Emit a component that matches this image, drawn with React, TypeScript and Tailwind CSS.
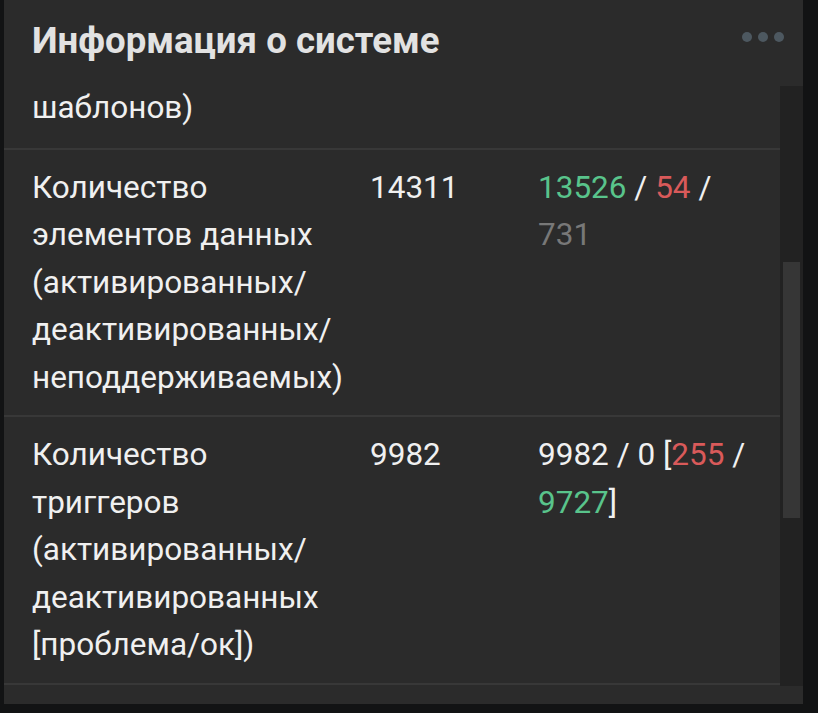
const font = { fontFamily: 'Roboto, "Liberation Sans", sans-serif' };

type Row = { label: string[]; total?: string; detail?: React.ReactNode };

const rows: Row[] = [
  {
    label: ['Количество', 'элементов данных', '(активированных/', 'деактивированных/', 'неподдерживаемых)'],
    total: '14311',
    detail: (
      <>
        <span className="text-[#59c48b]">13526</span> / <span className="text-[#d95a5a]">54</span> /{' '}
        <span className="text-[#787878]">731</span>
      </>
    ),
  },
  {
    label: ['Количество', 'триггеров', '(активированных/', 'деактивированных', '[проблема/ок])'],
    total: '9982',
    detail: (
      <>
        9982 / 0 [<span className="text-[#d95a5a]">255</span> /{' '}
        <span className="text-[#59c48b]">9727</span>]
      </>
    ),
  },
];

function DataRow({ row }: { row: Row }) {
  return (
    <div className="grid grid-cols-[338px_168px_1fr] border-t-2 border-[#383838] pl-[28px] pr-[20px] pt-[14px] pb-[14px]">
      <div>
        {row.label.map((l, i) => (
          <div key={i} className="whitespace-nowrap">{l}</div>
        ))}
      </div>
      <div>{row.total}</div>
      <div>{row.detail}</div>
    </div>
  );
}

export default function App() {
  return (
    <div className="flex h-[713px] w-[818px] bg-[#121314] pl-[4px]" style={font}>
      <div className="flex h-[704px] w-[799px] flex-col bg-[#2b2b2b]">
        <div className="flex h-[86px] shrink-0 items-start justify-between pl-[28px] pr-[19px] pt-[19px]">
          <h2 className="text-[36.6px] font-bold leading-[44px] text-[#e2e2e2]">Информация о системе</h2>
          <div className="mt-[13px] flex gap-[6px]">
            <span className="h-[10px] w-[10px] rounded-full bg-[#4d5860] blur-[0.6px]" />
            <span className="h-[10px] w-[10px] rounded-full bg-[#4d5860] blur-[0.6px]" />
            <span className="h-[10px] w-[10px] rounded-full bg-[#4d5860] blur-[0.6px]" />
          </div>
        </div>
        <div className="flex h-[600px] shrink-0">
          <div className="flex-1 overflow-hidden text-[31.5px] leading-[47.5px] text-[#f0f0f0]">
            <div className="-mt-[2px] pb-[16px] pl-[28px]">шаблонов)</div>
            {rows.map((r, i) => (
              <DataRow key={i} row={r} />
            ))}
            <div className="border-t-2 border-[#383838]" />
          </div>
          <div className="flex w-[23px] flex-col bg-[#222222] px-[3px]">
            <div className="mt-[176px] h-[256px] bg-[#363636]" />
          </div>
        </div>
      </div>
    </div>
  );
}
